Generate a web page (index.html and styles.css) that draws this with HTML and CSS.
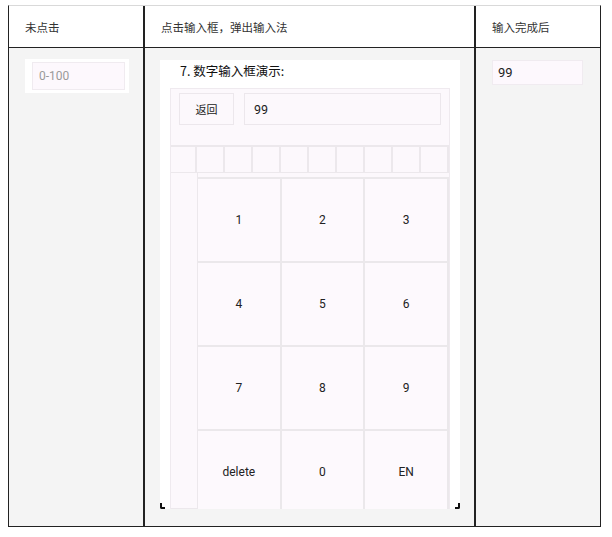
FILE: index.html
```html
<!DOCTYPE html>
<html lang="zh">
<head>
<meta charset="utf-8">
<title>数字输入框</title>
<link rel="stylesheet" href="styles.css">
</head>
<body>
<div class="table">
  <div class="cell head c1">未点击</div>
  <div class="cell head c2">点击输入框，弹出输入法</div>
  <div class="cell head c3">输入完成后</div>

  <div class="cell body c1">
    <div class="field-wrap"><div class="field placeholder">0-100</div></div>
  </div>

  <div class="cell body c2">
    <div class="phone">
      <div class="phone-title">7. 数字输入框演示:</div>
      <div class="demo">
        <div class="top-bar">
          <div class="btn">返回</div>
          <div class="input">99</div>
        </div>
        <div class="cands">
          <span></span><span></span><span></span><span></span><span></span>
          <span></span><span></span><span></span><span></span><span></span>
        </div>
        <div class="keypad">
          <div class="side"></div>
          <div class="keys">
            <div class="key">1</div><div class="key">2</div><div class="key">3</div>
            <div class="key">4</div><div class="key">5</div><div class="key">6</div>
            <div class="key">7</div><div class="key">8</div><div class="key">9</div>
            <div class="key">delete</div><div class="key">0</div><div class="key">EN</div>
          </div>
        </div>
      </div>
    </div>
  </div>

  <div class="cell body c3">
    <div class="field done">99</div>
  </div>
</div>
</body>
</html>
```
FILE: styles.css
```css
* { box-sizing: border-box; }
body {
  margin: 0;
  background: #fff;
  font-family: Roboto, "Noto Sans CJK SC", sans-serif;
  color: #222;
}
.table {
  margin: 5px 0 0 8px;
  width: 593px;
  display: grid;
  grid-template-columns: 136px 331px 124px;
  grid-template-rows: 42px 478px;
  border: 1px solid #222;
  border-top-color: #d9d9d9;
}
.cell { overflow: hidden; }
.cell.c1, .cell.c2 { border-right: 2px solid #222; }
.head {
  background: #fff;
  border-bottom: 1px solid #222;
  display: flex;
  align-items: center;
  padding-left: 16px;
  font-family: "Noto Sans CJK SC", sans-serif;
  font-size: 11.5px;
  color: #333;
}
.body { background: #f4f4f4; }

.field-wrap {
  margin: 11px 0 0 16px;
  width: 104px;
  height: 34px;
  background: #fff;
  padding: 3px 4px 3px 7px;
}
.field {
  height: 100%;
  background: #fdf8fd;
  border: 1px solid #f0ebf0;
  display: flex;
  align-items: center;
  font-size: 12px;
}
.placeholder { color: #9a9a9a; padding-left: 6px; }
.done {
  margin: 12px 0 0 16px;
  width: 91px;
  height: 25px;
  padding-left: 5px;
  font-size: 13px;
  color: #222;
}

.phone {
  position: relative;
  margin: 12px 0 0 15px;
  width: 300px;
  height: 449px;
  background: #fff;
  padding: 0 10px;
}
.phone::before, .phone::after {
  content: "";
  position: absolute;
  bottom: 0;
  width: 3px;
  height: 4px;
  border-bottom: 2px solid #111;
}
.phone::before { left: 0; border-left: 2px solid #111; border-bottom-left-radius: 2px; }
.phone::after { right: 0; border-right: 2px solid #111; border-bottom-right-radius: 2px; }
.phone-title {
  height: 28px;
  padding: 0 0 0 10px;
  line-height: 21px;
  font-family: "Noto Sans CJK SC", sans-serif;
  font-size: 12.5px;
  color: #111;
}
.demo {
  width: 280px;
  height: 421px;
  background: #fcf8fc;
  border: 1px solid #efeaef;
  border-bottom: none;
  overflow: hidden;
}
.top-bar {
  height: 56px;
  display: flex;
  padding: 4px 8px 0 8px;
  gap: 10px;
}
.btn, .input {
  height: 32px;
  border: 1px solid #ece7ec;
  background: #fcf8fc;
  display: flex;
  align-items: center;
}
.btn {
  width: 55px;
  justify-content: center;
  font-family: "Noto Sans CJK SC", sans-serif;
  font-size: 11px;
  color: #222;
}
.input {
  flex: 1;
  padding-left: 9px;
  font-size: 12.5px;
  color: #222;
}
.cands {
  height: 28px;
  display: grid;
  grid-template-columns: 26px repeat(9, 1fr);
  border-top: 2px solid #ece8ec;
  border-bottom: 1px solid #ece8ec;
}
.cands span { border-right: 2px solid #ece8ec; }
.keypad {
  display: flex;
  height: 340px;
}
.side {
  width: 27px;
  border-right: 1px solid #ece8ec;
  border-bottom: 1px solid #ece8ec;
  height: 336px;
}
.keys {
  flex: 1;
  padding-top: 4px;
  display: grid;
  grid-template-columns: repeat(3, 1fr);
  grid-auto-rows: 84px;
}
.key {
  border-top: 2px solid #ebe8eb;
  border-right: 2px solid #ebe8eb;
  background: #fdf9fd;
  display: flex;
  align-items: center;
  justify-content: center;
  font-size: 12px;
  color: #222;
}
```
